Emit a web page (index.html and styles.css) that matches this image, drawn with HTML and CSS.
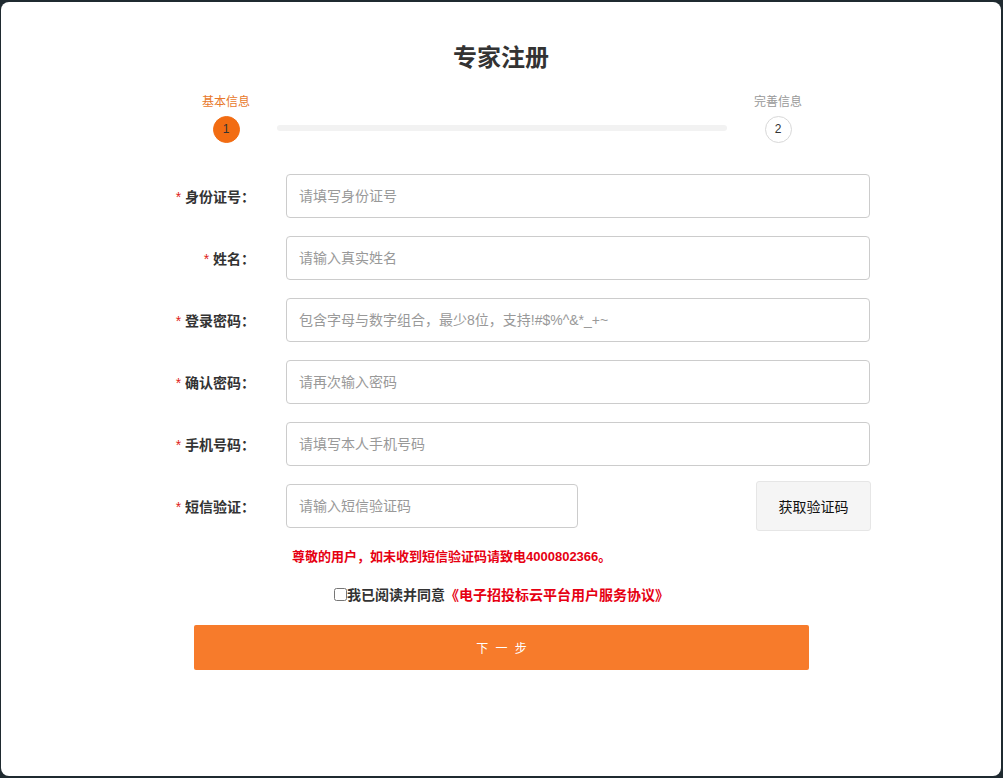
FILE: index.html
```html
<!DOCTYPE html>
<html lang="zh-CN">
<head>
    <meta charset="UTF-8">
    <title>专家注册</title>
    <link rel="stylesheet" href="styles.css">
</head>
<body>
    <div class="modal">
        <h1 class="title">专家注册</h1>

        <div class="steps">
            <div class="step active">
                <span class="step-name">基本信息</span>
                <span class="step-num">1</span>
            </div>
            <div class="step-bar"></div>
            <div class="step">
                <span class="step-name">完善信息</span>
                <span class="step-num">2</span>
            </div>
        </div>

        <form class="reg-form">
            <div class="form-row">
                <label class="form-label"><i>*</i> 身份证号：</label>
                <input class="form-input" type="text" placeholder="请填写身份证号">
            </div>
            <div class="form-row">
                <label class="form-label"><i>*</i> 姓名：</label>
                <input class="form-input" type="text" placeholder="请输入真实姓名">
            </div>
            <div class="form-row">
                <label class="form-label"><i>*</i> 登录密码：</label>
                <input class="form-input" type="password" placeholder="包含字母与数字组合，最少8位，支持!#$%^&amp;*_+~">
            </div>
            <div class="form-row">
                <label class="form-label"><i>*</i> 确认密码：</label>
                <input class="form-input" type="password" placeholder="请再次输入密码">
            </div>
            <div class="form-row">
                <label class="form-label"><i>*</i> 手机号码：</label>
                <input class="form-input" type="text" placeholder="请填写本人手机号码">
            </div>
            <div class="form-row sms-row">
                <label class="form-label"><i>*</i> 短信验证：</label>
                <input class="form-input sms-input" type="text" placeholder="请输入短信验证码">
                <button type="button" class="sms-btn">获取验证码</button>
            </div>

            <p class="sms-tip">尊敬的用户，如未收到短信验证码请致电4000802366。</p>

            <div class="agree">
                <input type="checkbox" id="agree"><label for="agree">我已阅读并同意</label><a href="#">《电子招投标云平台用户服务协议》</a>
            </div>
        </form>

        <button type="button" class="next-btn">下 一 步</button>
    </div>
</body>
</html>
```

FILE: styles.css
```css
* {
    box-sizing: border-box;
}

body {
    margin: 0;
    padding: 2px 2px 2px 1px;
    background-color: #1f2a30;
    font-family: "Liberation Sans", Arial, "Noto Sans CJK SC", sans-serif;
    color: #333;
}

.modal {
    height: 774px;
    background-color: #fff;
    border-radius: 8px;
    padding-top: 40px;
}

.title {
    margin: 0;
    text-align: center;
    font-size: 24px;
    line-height: 32px;
    font-weight: bold;
    color: #333;
}

/* 步骤条 */
.steps {
    display: flex;
    margin: 21px 0 0 200px;
    width: 602px;
}

.step {
    width: 50px;
    display: flex;
    flex-direction: column;
    align-items: center;
}

.step-name {
    font-size: 12px;
    line-height: 14px;
    color: #999;
    white-space: nowrap;
}

.step-num {
    width: 27px;
    height: 27px;
    margin-top: 7px;
    border-radius: 50%;
    border: 1px solid #d8d8d8;
    font-size: 12px;
    line-height: 25px;
    text-align: center;
    color: #333;
    background-color: #fff;
}

.step.active .step-name {
    color: #e8792c;
}

.step.active .step-num {
    background-color: #f26c12;
    border-color: #f26c12;
    color: #333;
}

.step-bar {
    width: 450px;
    height: 6px;
    margin: 30px 26px 0 26px;
    background-color: #f2f2f2;
    border-radius: 3px;
}

/* 表单 */
.reg-form {
    margin: 31px 0 0 159px;
    width: 711px;
}

.form-row {
    display: flex;
    align-items: center;
    margin-bottom: 18px;
}

.form-label {
    width: 95px;
    flex-shrink: 0;
    text-align: right;
    font-size: 14px;
    font-weight: bold;
    color: #333;
}

.form-label i {
    font-style: normal;
    font-weight: normal;
    color: #e02020;
}

.form-input {
    width: 584px;
    height: 44px;
    margin-left: 31px;
    padding: 0 12px;
    border: 1px solid #ccc;
    border-radius: 4px;
    font-size: 14px;
    font-family: inherit;
    color: #333;
    outline: none;
}

.form-input::placeholder {
    color: #999;
}

.sms-row {
    margin-top: -3px;
    margin-bottom: 0;
}

.sms-input {
    width: 292px;
}

.sms-btn {
    margin-left: auto;
    width: 115px;
    height: 50px;
    background-color: #f5f5f5;
    border: 1px solid #e6e6e6;
    border-radius: 3px;
    font-size: 14px;
    font-family: inherit;
    color: #111;
    cursor: pointer;
}

.sms-tip {
    margin: 18px 0 0 132px;
    font-size: 13px;
    line-height: 16px;
    font-weight: bold;
    color: #e60012;
}

.agree {
    margin: 19px 0 0 174px;
    display: flex;
    align-items: center;
    font-size: 14px;
    font-weight: bold;
}

.agree input {
    margin: 0;
    width: 13px;
    height: 13px;
}

.agree label {
    color: #333;
}

.agree a {
    color: #e60012;
    text-decoration: none;
}

.next-btn {
    display: block;
    width: 615px;
    height: 45px;
    margin: 21px 0 0 193px;
    background-color: #f77b2b;
    border: none;
    border-radius: 2px;
    color: #fff;
    font-size: 12px;
    letter-spacing: 2px;
    text-indent: 2px;
    font-family: inherit;
    cursor: pointer;
}
```
